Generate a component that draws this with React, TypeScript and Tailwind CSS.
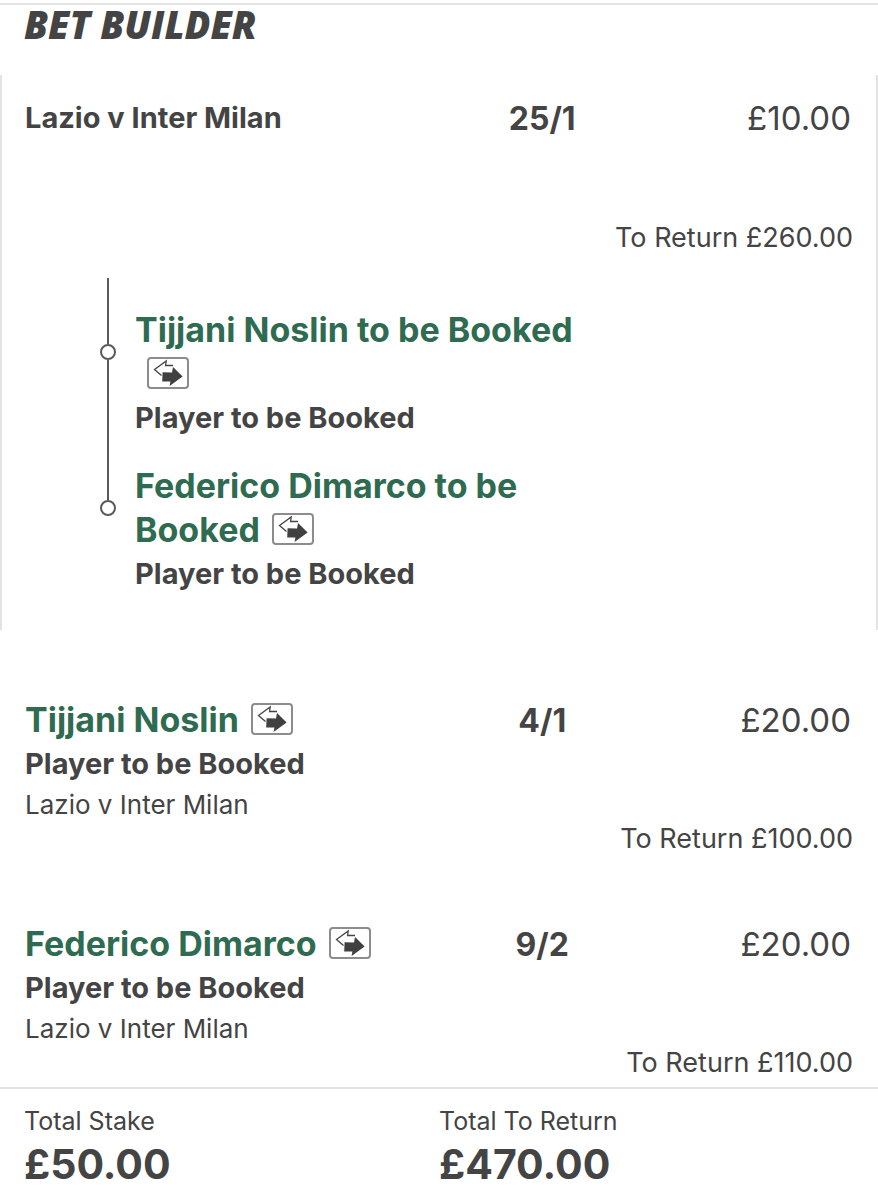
interface Leg {
  selection: string;
  market: string;
}

interface Single extends Leg {
  event: string;
  odds: string;
  stake: string;
  toReturn: string;
}

const LEGS: Leg[] = [
  { selection: 'Tijjani Noslin to be Booked', market: 'Player to be Booked' },
  { selection: 'Federico Dimarco to be Booked', market: 'Player to be Booked' },
];

const SINGLES: Single[] = [
  {
    selection: 'Tijjani Noslin',
    market: 'Player to be Booked',
    event: 'Lazio v Inter Milan',
    odds: '4/1',
    stake: '£20.00',
    toReturn: '£100.00',
  },
  {
    selection: 'Federico Dimarco',
    market: 'Player to be Booked',
    event: 'Lazio v Inter Milan',
    odds: '9/2',
    stake: '£20.00',
    toReturn: '£110.00',
  },
];

// Substitution badge: open arrow out, solid arrow in
function SubIcon() {
  return (
    <svg
      width="42"
      height="32"
      viewBox="0 0 42 32"
      role="img"
      aria-label="Substitution cover"
      className="ml-3 inline-block align-[-3px]"
    >
      <rect x="1" y="1" width="40" height="30" rx="3" fill="#fff" stroke="#8c8c8c" strokeWidth="2" />
      <path d="M26 8.5H18.6L19.2 4L7.5 12.5L14.5 18.5" fill="none" stroke="#444" strokeWidth="1.3" />
      <path d="M15.6 15.2L25 15.6L26 10L35.6 19.6L22.6 29L23.4 24.6L15.2 24.4Z" fill="#404040" />
    </svg>
  );
}

function BetRow({ odds, stake, children }: { odds: string; stake: string; children: React.ReactNode }) {
  return (
    <div className="grid grid-cols-[431fr_170fr_225fr]">
      <div>{children}</div>
      <p className="text-center text-[32px] leading-[46px] font-bold">{odds}</p>
      <p className="pr-0.5 text-right text-[33px] leading-[44px]">{stake}</p>
    </div>
  );
}

function BetBuilder() {
  return (
    <section className="border-x-2 border-[#e3e3e3] px-[23px] pt-[21px] pb-[34px]">
      <BetRow odds="25/1" stake="£10.00">
        <h2 className="text-[29px] leading-[44px] font-bold">Lazio v Inter Milan</h2>
      </BetRow>
      <p className="pt-[76px] text-right text-[27px] leading-[40px]">To Return £260.00</p>

      <ul className="mt-5 ml-[75px]">
        {LEGS.map((leg, i) => (
          <li key={leg.selection} className="flex gap-[19px]">
            <div className="flex w-4 flex-col items-center">
              <span className={i === 0 ? 'h-[66px] w-[2px] bg-[#5a5a5a]' : 'h-[60px] w-[2px] bg-[#5a5a5a]'} />
              <span className="size-4 rounded-full border-2 border-[#5a5a5a]" />
              {i < LEGS.length - 1 && <span className="w-[2px] flex-1 bg-[#5a5a5a]" />}
            </div>
            <div className={i === 0 ? 'max-w-[460px] pt-[30px]' : 'max-w-[460px] pt-6'}>
              <h3 className="text-[34px] leading-[44px] font-bold text-[#2f6b50]">
                {leg.selection}
                <SubIcon />
              </h3>
              <p className="text-[29px] leading-[44px] font-bold">{leg.market}</p>
            </div>
          </li>
        ))}
      </ul>
    </section>
  );
}

function SingleBet({ bet }: { bet: Single }) {
  return (
    <section className="px-[25px]">
      <BetRow odds={bet.odds} stake={bet.stake}>
        <h2 className="text-[34px] leading-[44px] font-bold text-[#2f6b50]">
          {bet.selection}
          <SubIcon />
        </h2>
        <p className="text-[29px] leading-[44px] font-bold">{bet.market}</p>
        <p className="text-[26px] leading-[38px]">{bet.event}</p>
      </BetRow>
      <p className="-mt-[7px] text-right text-[27px] leading-[44px]">To Return {bet.toReturn}</p>
    </section>
  );
}

export default function App() {
  return (
    <main className="bg-white pt-[3px] font-['Inter','Liberation_Sans',sans-serif] text-[#444]">
      <header className="border-t-2 border-[#e3e3e3] px-6 pb-8">
        <h1 className="font-['Open_Sans',sans-serif] text-[38px] leading-[38px] font-extrabold italic">BET BUILDER</h1>
      </header>

      <BetBuilder />

      <div className="flex flex-col gap-[61px] pt-[68px] pb-0.5">
        {SINGLES.map((bet) => (
          <SingleBet key={bet.selection} bet={bet} />
        ))}
      </div>

      <footer className="border-t-2 border-[#e3e3e3] px-6 pt-[15px] pb-3">
        <dl className="grid grid-cols-2">
          <div>
            <dt className="text-[25px] leading-[34px]">Total Stake</dt>
            <dd className="text-[41px] leading-[52px] font-bold">£50.00</dd>
          </div>
          <div>
            <dt className="text-[25px] leading-[34px]">Total To Return</dt>
            <dd className="text-[41px] leading-[52px] font-bold">£470.00</dd>
          </div>
        </dl>
      </footer>
    </main>
  );
}
